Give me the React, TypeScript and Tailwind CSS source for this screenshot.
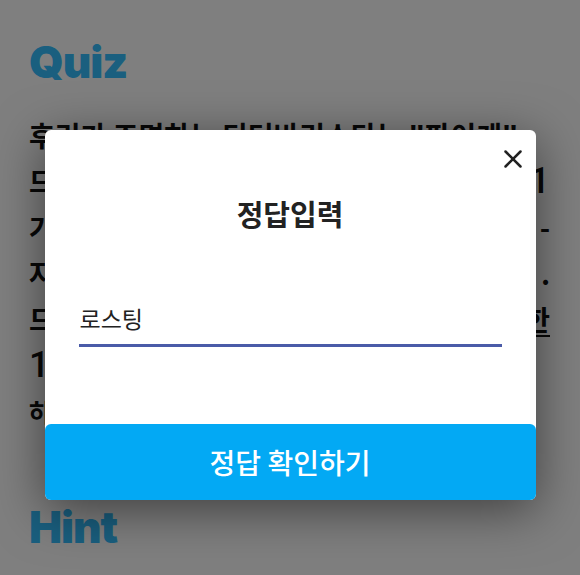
import { X } from 'lucide-react'

const font = { fontFamily: '"Noto Sans CJK KR", "Noto Sans", sans-serif' }

function QuizPage() {
  return (
    <div className="h-[575px] overflow-hidden bg-white pl-[29px] pr-[30px] pt-[34px]" style={font}>
      <h1 className="font-['Inter','Lato',sans-serif] text-[44px] font-black leading-[56px] tracking-[-1px] text-[#34beff]">
        Quiz
      </h1>
      <div className="mt-[22px] text-[28px] font-semibold leading-[46px] text-[#111]">
        <p className="whitespace-nowrap">후리가 조명하는 디더바리스타는 "파이게"</p>
        <p className="flex items-center justify-between whitespace-nowrap">
          <span>므</span>
          <span className="font-['Roboto',sans-serif] text-[36px] font-medium">1</span>
        </p>
        <p className="flex justify-between whitespace-nowrap">
          <span>가</span>
          <span>-</span>
        </p>
        <p className="flex justify-between whitespace-nowrap">
          <span>자</span>
          <span>.</span>
        </p>
        <p className="flex justify-between whitespace-nowrap">
          <span>드</span>
          <span className="underline underline-offset-4">한</span>
        </p>
        <p className="flex items-center justify-between whitespace-nowrap">
          <span className="font-['Roboto',sans-serif] text-[36px] font-medium">1</span>
        </p>
        <p className="flex justify-between whitespace-nowrap text-[25px]">
          <span>하</span>
        </p>
      </div>
      <h2 className="mt-[65px] font-['Inter','Lato',sans-serif] text-[44px] font-black leading-[56px] tracking-[-1px] text-[#34beff]">
        Hint
      </h2>
    </div>
  )
}

function AnswerModal() {
  return (
    <div className="absolute inset-0 flex justify-center bg-black/50 pt-[130px]" style={font}>
      <div className="flex h-[370px] w-[491px] flex-col overflow-hidden rounded-[6px] bg-white shadow-[0_10px_50px_rgba(0,0,0,0.5)]">
        <div className="flex justify-end pr-[8px] pt-[14px]">
          <button type="button" className="text-[#222]">
            <X size={30} strokeWidth={2} />
          </button>
        </div>
        <h3 className="mt-[20px] text-center text-[29px] font-bold leading-[38px] text-[#222]">정답입력</h3>
        <div className="mx-[34px] mt-[70px] border-b-[3px] border-[#4a5ba8] pb-[10px] pl-[1px] text-[23px] leading-[32px] text-[#222]">
          로스팅
        </div>
        <button
          type="button"
          className="mt-auto h-[76px] w-full rounded-t-[6px] bg-[#03a9f4] text-[28px] font-medium text-white"
        >
          정답 확인하기
        </button>
      </div>
    </div>
  )
}

export default function App() {
  return (
    <div className="relative h-[575px] w-[580px] overflow-hidden">
      <QuizPage />
      <AnswerModal />
    </div>
  )
}
